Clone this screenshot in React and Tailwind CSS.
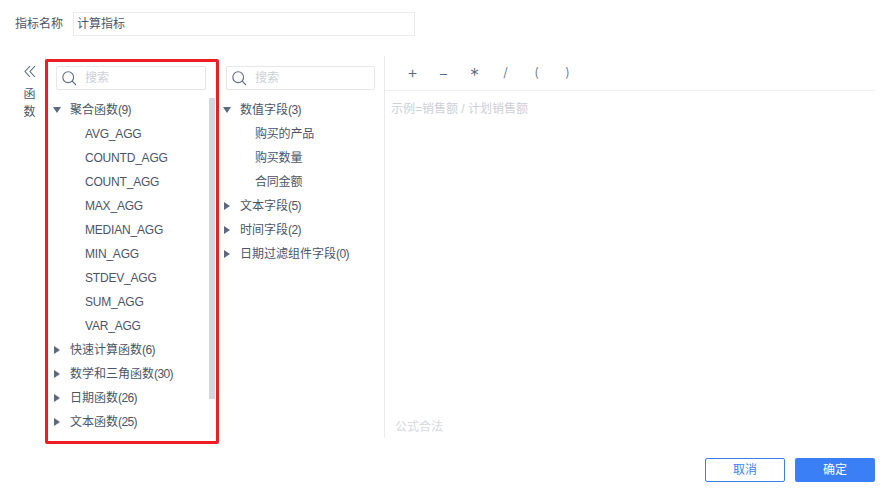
import React from "react";

const aggFuncs = ["AVG_AGG", "COUNTD_AGG", "COUNT_AGG", "MAX_AGG", "MEDIAN_AGG", "MIN_AGG", "STDEV_AGG", "SUM_AGG", "VAR_AGG"];
const funcGroups = [["快速计算函数", "(6)"], ["数学和三角函数", "(30)"], ["日期函数", "(26)"], ["文本函数", "(25)"]];
const fieldItems = ["购买的产品", "购买数量", "合同金额"];
const fieldGroups = [["文本字段", "(5)"], ["时间字段", "(2)"], ["日期过滤组件字段", "(0)"]];
const ops = [
  ["+", "text-[17px]"],
  ["−", "text-[16px]"],
  ["*", "text-[19px] translate-y-[3px]"],
  ["/", "text-[13px]"],
  ["(", "text-[13px]"],
  [")", "text-[13px]"],
];

const Arrow = ({ open }) => (
  <span className="w-[17px] shrink-0 flex items-center">
    {open ? (
      <span className="w-0 h-0 border-l-[4.5px] border-r-[4.5px] border-t-[6px] border-l-transparent border-r-transparent border-t-[#5b6880]" />
    ) : (
      <span className="ml-[1px] w-0 h-0 border-t-[4.5px] border-b-[4.5px] border-l-[6px] border-t-transparent border-b-transparent border-l-[#5b6880]" />
    )}
  </span>
);

const GroupRow = ({ open, name, count }) => (
  <div className="h-6 flex items-center">
    <Arrow open={open} />
    <span>{name}</span>
    <span className="tracking-[-0.6px]">{count}</span>
  </div>
);

const LeafRow = ({ label }) => <div className="h-6 flex items-center pl-[32px] tracking-[-0.2px]">{label}</div>;

const SearchIcon = () => (
  <svg width="15" height="15" viewBox="0 0 15 15" fill="none" stroke="#5f6b80" strokeWidth="1.1" className="shrink-0">
    <circle cx="6.2" cy="6.2" r="5.4" />
    <path d="M10.2 10.2 L14 14" />
  </svg>
);

const SearchBox = () => (
  <div className="h-[24px] border border-[#e4e7ec] rounded-[2px] flex items-center pl-[5px]">
    <SearchIcon />
    <span className="ml-[8px] text-[#ccd0d8]">搜索</span>
  </div>
);

export default function App() {
  return (
    <div
      className="relative w-[889px] h-[489px] bg-white text-[12px] text-[#4a5568] overflow-hidden"
      style={{ fontFamily: '"Liberation Sans", "Noto Sans CJK SC", sans-serif' }}
    >
      <div className="flex items-center h-6 mt-3 pl-[15px]">
        <span className="w-[58px]">指标名称</span>
        <div className="w-[342px] h-6 border border-[#e8eaee] flex items-center pl-[3px]">计算指标</div>
      </div>

      <div className="flex h-[382px] mt-5 pl-[15px]">
        <div className="w-[30px] pt-[9px] flex flex-col items-center pr-[1px]">
          <svg width="12" height="13" viewBox="0 0 12 13" fill="none" stroke="#5b6880" strokeWidth="1.1">
            <path d="M6 1 L1 6.5 L6 12" />
            <path d="M11 1 L6 6.5 L11 12" />
          </svg>
          <div className="mt-[7px] leading-[18px] w-3">函 数</div>
        </div>

        <div className="relative w-[170px] border-l border-[#e8eaee]">
          <div className="pt-[10px] pl-[10px] pr-[9px]">
            <SearchBox />
          </div>
          <div className="pt-2 pl-[7px]">
            <GroupRow open name="聚合函数" count="(9)" />
            {aggFuncs.map((f) => (
              <LeafRow key={f} label={f} />
            ))}
            {funcGroups.map(([n, c]) => (
              <GroupRow key={n} name={n} count={c} />
            ))}
          </div>
          <div className="absolute right-0 top-[42px] bottom-0 w-[6px] bg-[#f8f9fa]">
            <div className="h-[301px] bg-[#d3d6df]" />
          </div>
        </div>

        <div className="w-[170px] border-r border-[#e8eaee]">
          <div className="pt-[10px] pl-[11px] pr-[9px]">
            <SearchBox />
          </div>
          <div className="pt-2 pl-[8px]">
            <GroupRow open name="数值字段" count="(3)" />
            {fieldItems.map((f) => (
              <LeafRow key={f} label={f} />
            ))}
            {fieldGroups.map(([n, c]) => (
              <GroupRow key={n} name={n} count={c} />
            ))}
          </div>
        </div>

        <div className="w-[490px] flex flex-col">
          <div className="h-[35px] border-b border-[#eef0f3] flex items-center pl-[12px]">
            {ops.map(([o, size]) => (
              <span
                key={o}
                className={`w-[31px] text-center font-light text-[#5b6880] ${size}`}
                style={{ fontFamily: "Inter, sans-serif" }}
              >
                {o}
              </span>
            ))}
          </div>
          <div className="pl-[6px] pt-[9px] text-[#ccd0d8]">示例=销售额 / 计划销售额</div>
          <div className="mt-auto pl-[10px] pb-[2px] text-[#d5d8de]">公式合法</div>
        </div>
      </div>

      <div className="flex justify-end gap-[10px] mt-5 pr-[14px]">
        <button className="w-20 h-6 border border-[#3a7ff0] rounded-[2px] text-[#3a7ff0]">取消</button>
        <button className="w-20 h-6 bg-[#3a7ff6] rounded-[2px] text-white">确定</button>
      </div>

      <div className="absolute left-[45px] top-[59px] w-[174px] h-[385px] border-[3px] border-[#ee1c25] rounded-[2px]" />
    </div>
  );
}
